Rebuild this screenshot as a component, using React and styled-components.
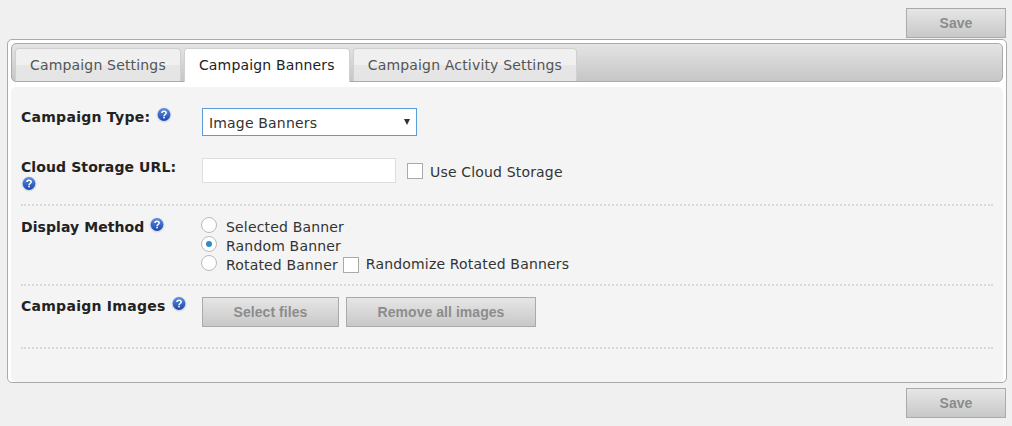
import React from 'react';
import styled, { createGlobalStyle } from 'styled-components';

const GlobalStyle = createGlobalStyle`
  html, body {
    margin: 0;
    padding: 0;
    background: #f0f0f0;
    font-family: "DejaVu Sans", Verdana, sans-serif;
    font-size: 14px;
    letter-spacing: 0.17px;
    color: #222;
  }
  * {
    box-sizing: border-box;
  }
`;

const Page = styled.div`
  width: 1012px;
  height: 426px;
  padding: 8px 5px 0 7px;
  overflow: hidden;
`;

const SaveBar = styled.div`
  display: flex;
  justify-content: flex-end;
  margin: ${(p) => (p.$bottom ? '5px' : '0')} 1px ${(p) => (p.$bottom ? '0' : '1px')} 0;
`;

const Button = styled.button`
  height: 30px;
  width: ${(p) => p.$width}px;
  padding: 0;
  border: 1px solid #aaa;
  background: linear-gradient(to bottom, #e6e6e6, #c8c8c8);
  color: #8c8c8c;
  font-family: "Liberation Sans", Arial, sans-serif;
  font-size: 14px;
  font-weight: bold;
  letter-spacing: 0.05px;
`;

const Panel = styled.div`
  height: 344px;
  padding: 3px;
  background: #fff;
  border: 1px solid #aaa;
  border-radius: 5px;
`;

const TabBar = styled.div`
  display: flex;
  align-items: flex-end;
  gap: 3px;
  height: 39px;
  padding: 0 0 0 3px;
  background: linear-gradient(to bottom, #e4e4e4, #c6c6c6);
  border: 1px solid #aaa;
  border-radius: 5px;
`;

const Tab = styled.div`
  height: ${(p) => (p.$active ? '34px' : '33px')};
  margin-bottom: ${(p) => (p.$active ? '-1px' : '0')};
  padding: 0 14px ${(p) => (p.$active ? '2px' : '0')};
  display: flex;
  align-items: center;
  border: 1px solid #d0d0d0;
  border-bottom: none;
  border-radius: 4px 4px 0 0;
  background: ${(p) =>
    p.$active ? '#fff' : 'linear-gradient(to bottom, #f0f0f0 50%, #e6e6e6 50%, #e4e4e4)'};
  color: ${(p) => (p.$active ? '#222' : '#555')};
  font-size: 14px;
`;

const Content = styled.div`
  height: 295px;
  margin-top: 5px;
  padding: 0 10px;
  background: #f4f4f4;
  border-radius: 5px;
`;

const Row = styled.div`
  display: grid;
  grid-template-columns: 181px 1fr;
  height: ${(p) => p.$height}px;
  padding-top: ${(p) => p.$top}px;
  border-bottom: ${(p) => (p.$plain ? 'none' : '2px dotted #d8d8d8')};
`;

const Label = styled.div`
  font-weight: bold;
  font-size: 14px;
  line-height: 18px;
  letter-spacing: ${(p) => p.$spacing || 0.27}px;
  color: #222;
  margin-top: ${(p) => p.$top || 0}px;
`;

const Help = styled.svg`
  width: 16px;
  height: 16px;
  vertical-align: top;
  margin-top: ${(p) => p.$lift || 0}px;
`;

const HelpIcon = ({ lift }) => (
  <Help viewBox="0 0 16 16" $lift={lift}>
    <defs>
      <linearGradient id="helpFill" x1="0" y1="0" x2="0" y2="1">
        <stop offset="0" stopColor="#5f8fe0" />
        <stop offset="1" stopColor="#1c46a8" />
      </linearGradient>
    </defs>
    <circle cx="8" cy="8" r="7.6" fill="#d5dff0" />
    <circle cx="8" cy="7.5" r="6.4" fill="url(#helpFill)" />
    <path
      d="M5.9 6.1C5.9 4.8 6.9 4.2 8 4.2s2.2.7 2.2 1.8c0 1.5-2.1 1.5-2.1 3"
      fill="none"
      stroke="#fff"
      strokeWidth="1.5"
    />
    <rect x="7.2" y="9.7" width="1.7" height="1.6" fill="#fff" />
  </Help>
);

const SelectWrap = styled.div`
  position: relative;
  width: 215px;
  height: 28px;

  &::after {
    content: '';
    position: absolute;
    right: 7px;
    top: 11px;
    border-left: 3px solid transparent;
    border-right: 3px solid transparent;
    border-top: 6px solid #333;
  }
`;

const Select = styled.select`
  appearance: none;
  width: 100%;
  height: 100%;
  padding: 2px 6px 0;
  border: 1px solid #5b9dd9;
  background: #fff;
  color: #333;
  font-family: inherit;
  font-size: 14px;
  letter-spacing: 0.17px;
  outline: none;
`;

const Line = styled.div`
  display: flex;
  align-items: center;
  height: ${(p) => p.$height || 19}px;
  padding-top: ${(p) => p.$pad || 0}px;
  color: #333;
  font-size: 14px;
`;

const Raised = styled.span`
  margin-top: -2px;
`;

const TextInput = styled.input`
  width: 194px;
  height: 25px;
  border: 1px solid #ddd;
  background: #fff;
  outline: none;
  margin: -2px 11px 0 0;
`;

const Check = styled.input.attrs({ type: 'checkbox' })`
  appearance: none;
  width: 16px;
  height: 16px;
  margin: ${(p) => p.$margin};
  border: 1px solid #aaa;
  background: #fff;
`;

const Radio = styled.input.attrs({ type: 'radio' })`
  appearance: none;
  width: 16px;
  height: 16px;
  margin: -3px 9px 0 -1px;
  border: 1px solid #bbb;
  border-radius: 50%;
  background: #fff;
  position: relative;

  &:checked::after {
    content: '';
    position: absolute;
    left: 4px;
    top: 4px;
    width: 6px;
    height: 6px;
    border-radius: 50%;
    background: #2a8fc4;
  }
`;

const Stack = styled.div`
  display: flex;
  flex-direction: column;
`;

const Actions = styled.div`
  display: flex;
  gap: 7px;
`;

export default function App() {
  return (
    <Page>
      <GlobalStyle />
      <SaveBar>
        <Button $width={100}>Save</Button>
      </SaveBar>
      <Panel>
        <TabBar>
          <Tab>Campaign Settings</Tab>
          <Tab $active>Campaign Banners</Tab>
          <Tab>Campaign Activity Settings</Tab>
        </TabBar>
        <Content>
          <Row $height={71} $top={21} $plain>
            <Label><span>Campaign Type:</span> <HelpIcon lift={-1} /></Label>
            <SelectWrap>
              <Select defaultValue="image">
                <option value="image">Image Banners</option>
              </Select>
            </SelectWrap>
          </Row>
          <Row $height={48} $top={0}>
            <Label $spacing={0.1}>Cloud Storage URL:<br /><HelpIcon /></Label>
            <Line $height={25} $pad={2}>
              <TextInput type="text" />
              <Check $margin="-2px 7px 0 0" />
              Use Cloud Storage
            </Line>
          </Row>
          <Row $height={80} $top={11}>
            <Label $top={1} $spacing={0.07}>Display Method <HelpIcon lift={-1} /></Label>
            <Stack>
              <Line><Radio name="method" />Selected Banner</Line>
              <Line><Radio name="method" defaultChecked />Random Banner</Line>
              <Line><Radio name="method" />Rotated Banner<Check $margin="0 7px 0 5px" /><Raised>Randomize Rotated Banners</Raised></Line>
            </Stack>
          </Row>
          <Row $height={63} $top={11}>
            <Label>Campaign Images <HelpIcon lift={-1} /></Label>
            <Actions>
              <Button $width={137}>Select files</Button>
              <Button $width={190}>Remove all images</Button>
            </Actions>
          </Row>
        </Content>
      </Panel>
      <SaveBar $bottom>
        <Button $width={100}>Save</Button>
      </SaveBar>
    </Page>
  );
}
